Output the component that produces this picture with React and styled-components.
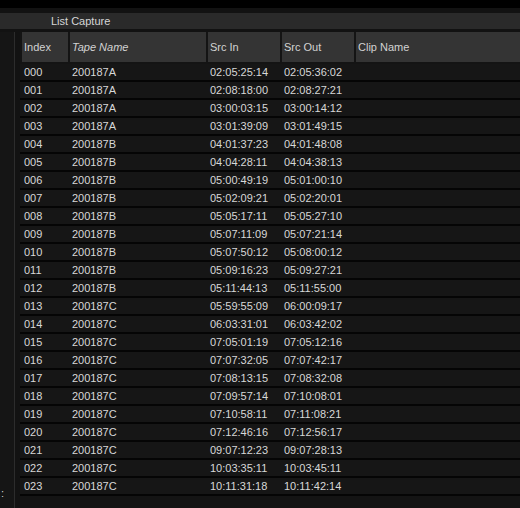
import React from "react";
import styled, { createGlobalStyle } from "styled-components";

const GlobalStyle = createGlobalStyle`
  body {
    margin: 0;
    background: #000;
    font-family: "Liberation Sans", Arial, sans-serif;
  }
`;

const Window = styled.div`
  width: 520px;
  height: 508px;
  display: flex;
  flex-direction: column;
  background: #121212;
  overflow: hidden;
`;

const TopBar = styled.div`
  height: 8px;
  background: #000;
`;

const TitleBar = styled.div`
  height: 16px;
  margin-top: 5px;
  background: #2a2a2a;
  color: #d6d6d6;
  font-size: 11px;
  line-height: 16px;
  padding-left: 51px;
`;

const Body = styled.div`
  flex: 1;
  display: flex;
  margin-top: 3px;
  min-height: 0;
`;

const Rail = styled.div`
  width: 13px;
  padding-left: 1px;
  border-right: 1px solid #2c2c2c;
  display: flex;
  flex-direction: column;
  justify-content: flex-end;
  padding-bottom: 9px;
  color: #cfcfcf;
  font-size: 11px;
  line-height: 12px;
  background: #151515;
`;

const Table = styled.div`
  flex: 1;
  margin-left: 5px;
  display: flex;
  flex-direction: column;
  background: #141414;
`;

const cols = "46px 136px 72px 72px 1fr";

const HeaderRow = styled.div`
  display: grid;
  grid-template-columns: ${cols};
  column-gap: 2px;
  height: 30px;
  margin-left: 2px;
  margin-bottom: 2px;
  background: #141414;
`;

const HeaderCell = styled.div`
  background: #343434;
  color: #d2d2d2;
  font-size: 11px;
  font-style: ${(p) => (p.$italic ? "italic" : "normal")};
  line-height: 30px;
  padding-left: 2px;
  white-space: nowrap;
`;

const Row = styled.div`
  display: grid;
  grid-template-columns: ${cols};
  column-gap: 2px;
  height: 16px;
  padding-left: 2px;
  background: #161616;
  border-bottom: 2px solid #050505;
`;

const Cell = styled.div`
  color: #d8d8d8;
  font-size: 11px;
  line-height: 17px;
  padding-left: 2px;
  white-space: nowrap;
`;

const clips = [
  ["000", "200187A", "02:05:25:14", "02:05:36:02"],
  ["001", "200187A", "02:08:18:00", "02:08:27:21"],
  ["002", "200187A", "03:00:03:15", "03:00:14:12"],
  ["003", "200187A", "03:01:39:09", "03:01:49:15"],
  ["004", "200187B", "04:01:37:23", "04:01:48:08"],
  ["005", "200187B", "04:04:28:11", "04:04:38:13"],
  ["006", "200187B", "05:00:49:19", "05:01:00:10"],
  ["007", "200187B", "05:02:09:21", "05:02:20:01"],
  ["008", "200187B", "05:05:17:11", "05:05:27:10"],
  ["009", "200187B", "05:07:11:09", "05:07:21:14"],
  ["010", "200187B", "05:07:50:12", "05:08:00:12"],
  ["011", "200187B", "05:09:16:23", "05:09:27:21"],
  ["012", "200187B", "05:11:44:13", "05:11:55:00"],
  ["013", "200187C", "05:59:55:09", "06:00:09:17"],
  ["014", "200187C", "06:03:31:01", "06:03:42:02"],
  ["015", "200187C", "07:05:01:19", "07:05:12:16"],
  ["016", "200187C", "07:07:32:05", "07:07:42:17"],
  ["017", "200187C", "07:08:13:15", "07:08:32:08"],
  ["018", "200187C", "07:09:57:14", "07:10:08:01"],
  ["019", "200187C", "07:10:58:11", "07:11:08:21"],
  ["020", "200187C", "07:12:46:16", "07:12:56:17"],
  ["021", "200187C", "09:07:12:23", "09:07:28:13"],
  ["022", "200187C", "10:03:35:11", "10:03:45:11"],
  ["023", "200187C", "10:11:31:18", "10:11:42:14"],
];

export default function App() {
  return (
    <>
      <GlobalStyle />
      <Window>
        <TopBar />
        <TitleBar>List Capture</TitleBar>
        <Body>
          <Rail>
            <span>:</span>
          </Rail>
          <Table>
            <HeaderRow>
              <HeaderCell>Index</HeaderCell>
              <HeaderCell $italic>Tape Name</HeaderCell>
              <HeaderCell>Src In</HeaderCell>
              <HeaderCell>Src Out</HeaderCell>
              <HeaderCell>Clip Name</HeaderCell>
            </HeaderRow>
            {clips.map(([idx, tape, srcIn, srcOut]) => (
              <Row key={idx}>
                <Cell>{idx}</Cell>
                <Cell>{tape}</Cell>
                <Cell>{srcIn}</Cell>
                <Cell>{srcOut}</Cell>
                <Cell />
              </Row>
            ))}
          </Table>
        </Body>
      </Window>
    </>
  );
}
